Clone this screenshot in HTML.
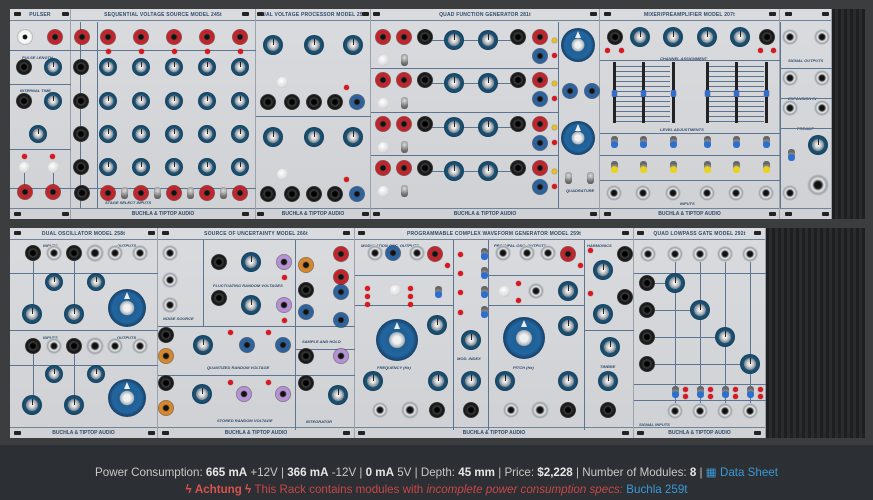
<!DOCTYPE html>
<html><head><meta charset="utf-8">
<style>
*{margin:0;padding:0;box-sizing:border-box}
body{width:873px;height:500px;background:#2c2f33;overflow:hidden;font-family:"Liberation Sans",sans-serif;position:relative}
#rack{position:absolute;left:0;top:0;width:873px;height:445px;background:#3c3d3f}
.stripes{position:absolute;background:repeating-linear-gradient(90deg,#1e1f21 0 3px,#2a2b2d 3px 6px)}
.mod{position:absolute;background:linear-gradient(180deg,#d9dbde,#cfd1d4);border-right:1px solid #9aa3ad}
.hdr{position:absolute;left:0;right:0;top:0;height:12px;border-bottom:1px solid #6f8399;font:bold 5px "Liberation Sans",sans-serif;color:#2f4a6b;text-align:center;line-height:12px;letter-spacing:.2px}
.ftr{position:absolute;left:0;right:0;bottom:0;height:11px;border-top:1px solid #6f8399;font:bold 5px "Liberation Sans",sans-serif;color:#2f4a6b;text-align:center;line-height:11px}
.tab{position:absolute;width:7px;height:4px;background:#222;border-radius:1px}
.k,.j,.led,.btn,.bk,.tg,.vl,.hl{position:absolute}
.k{border-radius:50%;background:radial-gradient(circle closest-side,#eceef0 0 15%,#b0b5ba 40%,#7d848b 58%,#1d5578 62%,#17496a 90%,#0f3550 100%)}
.k:after{content:"";position:absolute;left:50%;top:20%;width:1px;height:30%;background:#222}
.bk{border-radius:50%;background:radial-gradient(circle closest-side,#eef0f2 0 18%,#a9b0b7 36%,#1e5f93 40%,#2366a0 75%,#163f66 100%)}
.bk:after{content:"";position:absolute;left:calc(50% - 3px);top:8%;width:0;height:0;border-left:3px solid transparent;border-right:3px solid transparent;border-bottom:7px solid #eee}
.j{border-radius:50%}
.led{width:5px;height:5px;border-radius:50%;background:#e0141c;box-shadow:0 0 1px #600}
.btn{width:11px;height:11px;border-radius:50%;background:radial-gradient(circle at 40% 35%,#fff,#ddd 60%,#aaa)}
.tg{width:7px;height:12px;border-radius:3px;background:radial-gradient(circle at 50% 30%,#ddd,#777 60%,#555)}
.vl{width:1px;background:#5c7593}
.hl{height:1px;background:#5c7593}
.t{position:absolute;font:italic bold 4px "Liberation Sans",sans-serif;color:#2f4a6b;white-space:nowrap}
.info{position:absolute;left:0;width:873px;text-align:center;font-size:11.6px;color:#c8c8c8}
.info b{color:#e6e6e6}
</style></head><body>
<div id="rack">
<div class="stripes" style="left:832px;top:9px;width:33px;height:210px"></div>
<div class="stripes" style="left:766px;top:228px;width:99px;height:210px"></div>

<div class="mod" style="left:10px;top:9px;width:61px;height:210px"><div class="hdr">PULSER</div><div class="ftr"></div></div>
<div class="mod" style="left:71px;top:9px;width:185px;height:210px"><div class="hdr">SEQUENTIAL VOLTAGE SOURCE MODEL 245t</div><div class="ftr">BUCHLA &amp; TIPTOP AUDIO</div></div>
<div class="mod" style="left:256px;top:9px;width:115px;height:210px"><div class="hdr">DUAL VOLTAGE PROCESSOR MODEL 257t</div><div class="ftr">BUCHLA &amp; TIPTOP AUDIO</div></div>
<div class="mod" style="left:371px;top:9px;width:229px;height:210px"><div class="hdr">QUAD FUNCTION GENERATOR 281t</div><div class="ftr">BUCHLA &amp; TIPTOP AUDIO</div></div>
<div class="mod" style="left:600px;top:9px;width:180px;height:210px"><div class="hdr">MIXER/PREAMPLIFIER MODEL 207t</div><div class="ftr">BUCHLA &amp; TIPTOP AUDIO</div></div>
<div class="mod" style="left:780px;top:9px;width:52px;height:210px"><div class="hdr"></div><div class="ftr"></div></div>

<div class="mod" style="left:10px;top:228px;width:148px;height:210px"><div class="hdr">DUAL OSCILLATOR MODEL 258t</div><div class="ftr">BUCHLA &amp; TIPTOP AUDIO</div></div>
<div class="mod" style="left:158px;top:228px;width:197px;height:210px"><div class="hdr">SOURCE OF UNCERTAINTY MODEL 266t</div><div class="ftr">BUCHLA &amp; TIPTOP AUDIO</div></div>
<div class="mod" style="left:355px;top:228px;width:279px;height:210px"><div class="hdr">PROGRAMMABLE COMPLEX WAVEFORM GENERATOR MODEL 259t</div><div class="ftr">BUCHLA &amp; TIPTOP AUDIO</div></div>
<div class="mod" style="left:634px;top:228px;width:132px;height:210px"><div class="hdr">QUAD LOWPASS GATE MODEL 292t</div><div class="ftr">BUCHLA &amp; TIPTOP AUDIO</div></div>

<div class="t" style="left:22px;top:55px">PULSE LENGTH</div>
<div class="t" style="left:20px;top:88px">INTERNAL TIME</div>
<div class="t" style="left:105px;top:200px">STAGE SELECT INPUTS</div>
<div class="t" style="left:660px;top:56px">CHANNEL ASSIGNMENT</div>
<div class="t" style="left:660px;top:127px">LEVEL ADJUSTMENTS</div>
<div class="t" style="left:680px;top:201px">INPUTS</div>
<div class="t" style="left:788px;top:58px">SIGNAL OUTPUTS</div>
<div class="t" style="left:788px;top:96px">EXPANSION IN</div>
<div class="t" style="left:797px;top:126px">PREAMP</div>
<div class="t" style="left:566px;top:188px">QUADRATURE</div>
<div class="t" style="left:43px;top:243px">INPUTS</div>
<div class="t" style="left:117px;top:243px">OUTPUTS</div>
<div class="t" style="left:43px;top:335px">INPUTS</div>
<div class="t" style="left:117px;top:335px">OUTPUTS</div>
<div class="t" style="left:213px;top:283px">FLUCTUATING RANDOM VOLTAGES</div>
<div class="t" style="left:207px;top:365px">QUANTIZED RANDOM VOLTAGE</div>
<div class="t" style="left:217px;top:418px">STORED RANDOM VOLTAGE</div>
<div class="t" style="left:163px;top:316px">NOISE SOURCE</div>
<div class="t" style="left:302px;top:339px">SAMPLE AND HOLD</div>
<div class="t" style="left:306px;top:419px">INTEGRATOR</div>
<div class="t" style="left:377px;top:365px">FREQUENCY (Hz)</div>
<div class="t" style="left:513px;top:365px">PITCH (Hz)</div>
<div class="t" style="left:457px;top:356px">MOD. INDEX</div>
<div class="t" style="left:600px;top:364px">TIMBRE</div>
<div class="t" style="left:361px;top:243px">MODULATION OSC. OUTPUTS</div>
<div class="t" style="left:494px;top:243px">PRINCIPAL OSC. OUTPUTS</div>
<div class="t" style="left:587px;top:243px">HARMONICS</div>
<div class="t" style="left:639px;top:422px">SIGNAL INPUTS</div>
</div>

<div class="info" style="top:465px">Power Consumption: <b>665 mA</b> +12V | <b>366 mA</b> -12V | <b>0 mA</b> 5V | Depth: <b>45 mm</b> | Price: <b>$2,228</b> | Number of Modules: <b>8</b> | <span style="color:#3a9ad9">&#9638; Data Sheet</span></div>
<div class="info" style="top:483px;color:#c9474a"><b style="color:#d9534f">ϟ Achtung ϟ</b> This Rack contains modules with <i>incomplete power consumption specs:</i> <span style="color:#3a9ad9">Buchla 259t</span></div>

<script>
var R=document.getElementById('rack');
function el(c,x,y,w,h,s){var d=document.createElement('div');d.className=c;d.style.left=x+'px';d.style.top=y+'px';if(w)d.style.width=w+'px';if(h)d.style.height=h+'px';if(s)d.style.cssText+=s;R.appendChild(d);return d}
function K(x,y,r){r=r||9;el('k',x-r,y-r,2*r,2*r)}
function BK(x,y,r){r=r||18;el('bk',x-r,y-r,2*r,2*r)}
var col={r:'#c3242b',b:'#1a1a1a',u:'#2c62a0',p:'#b692d4',o:'#d7862a',w:'#eee',s:'#c7cbcf',g:'#b7babd'};
function J(x,y,c,r){r=r||8;var cc=col[c];var bg;
 if(c=='s'||c=='g')bg='radial-gradient(circle closest-side,#111 0 30%,#555 38%,#e8eaec 55%,#9ca2a8 80%,#d1d3d5 100%)';
 else if(c=='b')bg='radial-gradient(circle closest-side,#000 0 30%,#3a3a3a 45%,#111 80%,#444 100%)';
 else if(c=='w')bg='radial-gradient(circle closest-side,#111 0 25%,#fff 35%,#f2f2f2 80%,#aaa 100%)';
 else bg='radial-gradient(circle closest-side,#111 0 28%,#444 36%,'+cc+' 46%,'+cc+' 85%,rgba(0,0,0,.5) 100%)';
 el('j',x-r,y-r,2*r,2*r,'background:'+bg)}
function L(x,y,c){el('led',x-2.5,y-2.5,0,0,c?'background:'+c:'')}
function B(x,y){el('btn',x-5.5,y-5.5)}
function T(x,y,c){el('tg',x-3.5,y-6,0,0,c?'background:radial-gradient(circle at 50% 75%,'+c+' 0 35%,#888 45%,#666 70%)':'')}
function V(x,y1,y2){el('vl',x,y1,0,y2-y1)}
function H(x1,x2,y){el('hl',x1,y,x2-x1,0)}
[[14,12],[62,12],[242,12],[257,12],[362,12],[373,12],[590,12],[604,12],[769,12],[785,12],[822,12],[14,212],[62,212],[242,212],[257,212],[362,212],[373,212],[590,212],[604,212],[769,212],[785,212],[822,212],
[14,231],[148,231],[162,231],[343,231],[358,231],[622,231],[637,231],[754,231],[14,431],[148,431],[162,431],[343,431],[358,431],[622,431],[637,431],[754,431]].forEach(function(p){el('tab',p[0],p[1])});
H(10,71,50);H(10,71,84);H(10,71,149);H(10,71,188);H(71,256,50);H(71,256,188);V(97,22,208);V(80,22,208);
H(256,371,116);H(371,558,68);H(371,558,112);H(371,558,155);V(558,22,208);
H(600,780,60);H(600,780,133);H(600,780,155);H(600,780,180);H(780,832,68);H(780,832,98);H(780,832,128);V(780,22,208);
J(25,37,'w');J(55,37,'r');J(24,67,'b');K(53,67);J(24,101,'b');K(53,101);K(38,134);L(24,156);L(52,156);V(24,167,192);V(53,167,192);B(24,167);B(53,167);J(25,192,'r');J(53,192,'r');
J(82,37,'r');[108,141,174,207,240].forEach(function(x,i){J(x,37,'r');L(x,51);[67,101,134,167].forEach(function(y){K(x,y)});J(x,193,'r');if(i<4)T(x+16,193)});
[67,101,134,167].forEach(function(y){J(81,y,'b')});J(82,193,'b');
[45,137].forEach(function(y){K(273,y,10);K(314,y,10);K(353,y,10);B(282,y+37);[268,292,314,335].forEach(function(x){J(x,y+57,'b')});J(357,y+57,'u');L(346,y+42)});
[37,80,124,168].forEach(function(y){H(425,518,y+3);J(383,y,'r');J(404,y,'r');J(425,y,'b');K(454,y+3,10);K(488,y+3,10);J(518,y,'b');J(540,y,'r');J(540,y+19,'u');L(554,y+3,'#e6c21a');L(554,y+18);B(383,y+23);T(404,y+23)});
BK(578,45,17);BK(578,138,17);J(570,91,'u');J(592,91,'u');T(568,178);T(590,178);
J(615,37,'b');J(767,37,'b');[640,673,707,740].forEach(function(x){K(x,37,10)});L(607,50);L(621,50);L(760,50);L(773,50);
for(var y=66;y<122;y+=5){H(616,670,y);H(709,764,y)}
[614,643,673,707,736,766].forEach(function(x){el('vl',x-1,62,3,61,'background:#222');el('led',x-2.5,90,5,7,'background:#2c6fd0;border-radius:2px');T(x,142,'#2c6fd0');T(x,167,'#e8d21c');J(x,193,'s')});
J(790,37,'s');J(822,37,'s');J(790,78,'s');J(822,78,'s');J(790,108,'s');J(822,108,'s');K(818,145,10);T(791,155,'#2c6fd0');J(790,193,'s');J(818,185,'s',11);
H(10,158,273);H(10,158,330);H(10,158,365);
[[253,282,314,308],[346,374,405,398]].forEach(function(r){V(33,r[0],r[2]);V(74,r[0],r[2]);J(33,r[0],'b');J(54,r[0],'s');J(74,r[0],'b');J(95,r[0],'g',9);J(115,r[0],'s');J(140,r[0],'s');K(54,r[1]);K(96,r[1]);K(32,r[2],10);K(74,r[2],10);BK(127,r[3],19)});
V(203,240,326);H(158,355,326);H(158,355,375);V(295,240,430);H(295,355,349);
J(170,253,'s');J(170,280,'s');J(170,305,'s');J(219,262,'b');K(251,262,10);J(284,262,'p');J(219,298,'b');K(251,305,10);J(284,305,'p');L(284,277);L(284,320);
J(166,335,'b');J(166,356,'o');K(203,345,10);J(247,345,'u');J(283,345,'u');L(230,332);L(268,332);
J(166,383,'b');J(166,408,'o');K(202,394,10);J(244,394,'p');J(283,394,'p');L(230,382);L(268,382);
J(306,265,'o');J(341,254,'r');J(341,277,'r');J(306,290,'b');J(306,312,'u');J(341,292,'u');J(341,320,'u');
J(306,356,'b');J(341,356,'p');J(306,383,'b');K(338,395,10);
V(453,240,430);V(488,240,430);V(584,240,430);H(355,453,275);H(355,453,305);H(488,584,275);H(488,584,305);H(584,634,330);
J(375,253,'s');J(393,253,'u');J(417,253,'s');J(435,254,'r');L(447,265);L(367,288);L(367,296);L(367,304);B(395,290);L(410,288);L(410,296);L(410,304);T(438,292,'#2c6fd0');
BK(397,340,21);K(437,325,10);K(373,381,10);K(438,381,10);J(380,410,'s');J(410,410,'g',9);J(437,410,'b');
[254,273,292,312].forEach(function(y){L(460,y);T(484,y,'#2c6fd0')});K(471,340,10);K(471,381,10);J(471,410,'b');
J(503,253,'s');J(527,253,'s');J(548,253,'s');J(568,254,'r');L(580,265);B(504,291);L(518,283);L(518,300);J(536,291,'s');K(568,291,10);
BK(524,338,21);K(568,326,10);K(505,381,10);K(568,381,10);J(511,410,'s');J(540,410,'g',9);J(568,410,'b');
L(590,250);K(603,270,10);L(590,293);K(603,314,10);K(610,347,10);K(608,381,10);J(608,410,'b');J(625,254,'b');J(625,297,'b');
H(634,766,273);H(634,766,384);H(634,766,400);
J(648,254,'s');[675,700,725,750].forEach(function(x,i){V(x,262,404);H(647,x,283+27*i);J(x,254,'s');J(647,283+27*i,'b');K(x,283+27*i,10);T(x,392,'#2c6fd0');L(x+10,389);L(x+10,396);J(x,411,'s')});
</script>
</body></html>
